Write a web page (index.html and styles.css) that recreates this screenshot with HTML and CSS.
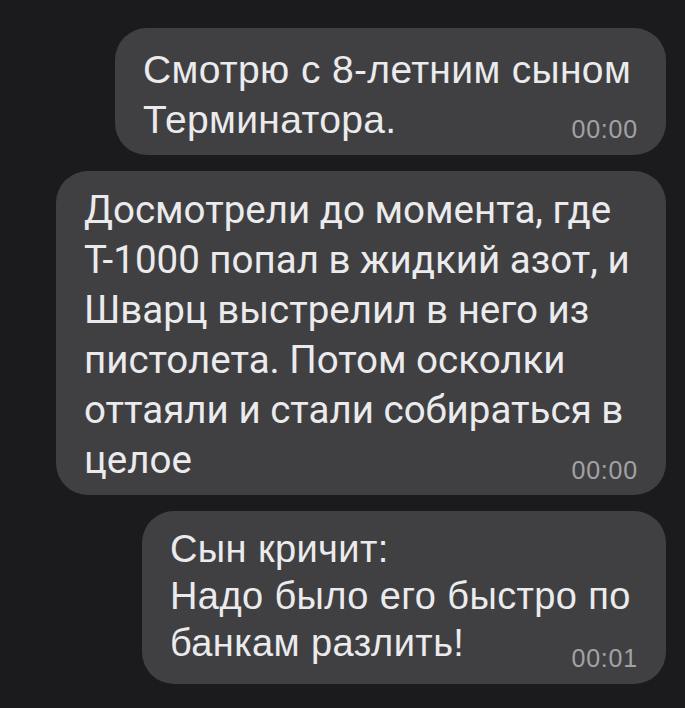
FILE: index.html
```html
<!DOCTYPE html>
<html lang="ru">
<head>
    <meta charset="UTF-8">
    <meta name="viewport" content="width=device-width, initial-scale=1.0">
    <title>Чат</title>
    <link rel="stylesheet" href="styles.css">
</head>
<body>
  <div class="chat">
      <div class="bubble bubble-first">
          <div class="text">Смотрю с 8-летним сыном Терминатора.</div>
          <span class="time">00:00</span>
      </div>
      <div class="bubble bubble-long">
          <div class="text">Досмотрели до момента, где Т-1000 попал в жидкий азот, и Шварц выстрелил в него из пистолета. Потом осколки оттаяли и стали собираться в целое</div>
          <span class="time">00:00</span>
      </div>
      <div class="bubble bubble-last">
          <div class="text">Сын кричит:<br>Надо было его быстро по банкам разлить!</div>
          <span class="time">00:01</span>
      </div>
  </div>
</body>
</html>
```

FILE: styles.css
```css
      body {
          margin: 0;
          background: #1b1b1d;
          font-family: "Liberation Sans", Arial, sans-serif;
          color: #ebebed;
      }

      .chat {
          display: flex;
          flex-direction: column;
          align-items: flex-end;
          gap: 16px;
          padding: 28px 19px 0 0;
      }

      .bubble {
          display: flex;
          flex-direction: column;
          box-sizing: border-box;
          background: #404042;
          border-radius: 32px;
          padding: 17px 28px 14px 28px;
      }

      .text {
          font-size: 39px;
          line-height: 50px;
          letter-spacing: 0.35px;
      }

      .time {
          align-self: flex-end;
          margin-top: -28px;
          font-size: 25px;
          line-height: 24px;
          letter-spacing: 0.8px;
          color: #a2a2a5;
      }

      .bubble-first {
          width: 551px;
      }

      .bubble-long {
          width: 610px;
          padding-top: 14px;
          padding-bottom: 13px;
      }

      .bubble-long .text {
          font-family: Roboto, sans-serif;
          font-size: 38.5px;
          letter-spacing: 0;
      }

      .bubble-long .time {
          margin-top: -27px;
      }

      .bubble-last {
          width: 524px;
          padding-top: 15px;
      }

      .bubble-last .text {
          font-size: 38px;
          line-height: 47px;
          letter-spacing: 0.4px;
      }

      .bubble-last .time {
          margin-top: -21px;
      }
```
